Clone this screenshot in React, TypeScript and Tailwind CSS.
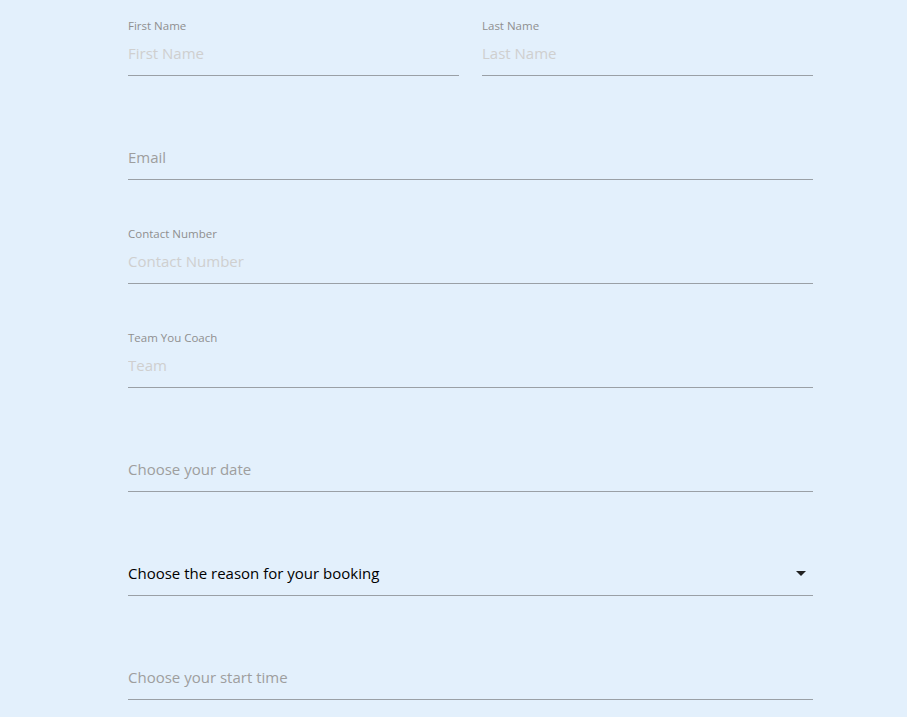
import React from 'react';

const font = { fontFamily: '"Open Sans", "Noto Sans", sans-serif' };

const Field = ({ label, placeholder, muted = false }: { label?: string; placeholder: string; muted?: boolean }) => (
  <div className="flex h-[58px] flex-col border-b border-[#9aa0a6]">
    <div className="h-[18px] text-[11.5px] leading-[16px] text-[#8f8f8f]">{label}</div>
    <input
      placeholder={placeholder}
      className={
        'h-[38px] w-full bg-transparent pb-[4px] text-[15px] outline-none ' +
        (muted ? 'placeholder-[#9e9e9e]' : 'placeholder-[#cfcfcf]')
      }
    />
  </div>
);

export default function App() {
  return (
    <div className="min-h-[717px] w-full bg-[#e3f0fc] pt-[18px]" style={font}>
      <div className="ml-[128px] flex w-[685px] flex-col gap-[46px]">
        <div className="grid grid-cols-2 gap-[23px]">
          <Field label="First Name" placeholder="First Name" />
          <Field label="Last Name" placeholder="Last Name" />
        </div>
        <Field placeholder="Email" muted />
        <Field label="Contact Number" placeholder="Contact Number" />
        <Field label="Team You Coach" placeholder="Team" />
        <Field placeholder="Choose your date" muted />
        <div className="flex h-[58px] flex-col border-b border-[#9aa0a6]">
          <div className="h-[18px]" />
          <div className="flex h-[38px] items-center justify-between pb-[4px] pr-[7px] text-[15px] text-black">
            <span>Choose the reason for your booking</span>
            <svg width="10" height="5" viewBox="0 0 10 5">
              <path d="M0 0h10L5 5z" fill="#222" />
            </svg>
          </div>
        </div>
        <Field placeholder="Choose your start time" muted />
      </div>
    </div>
  );
}
